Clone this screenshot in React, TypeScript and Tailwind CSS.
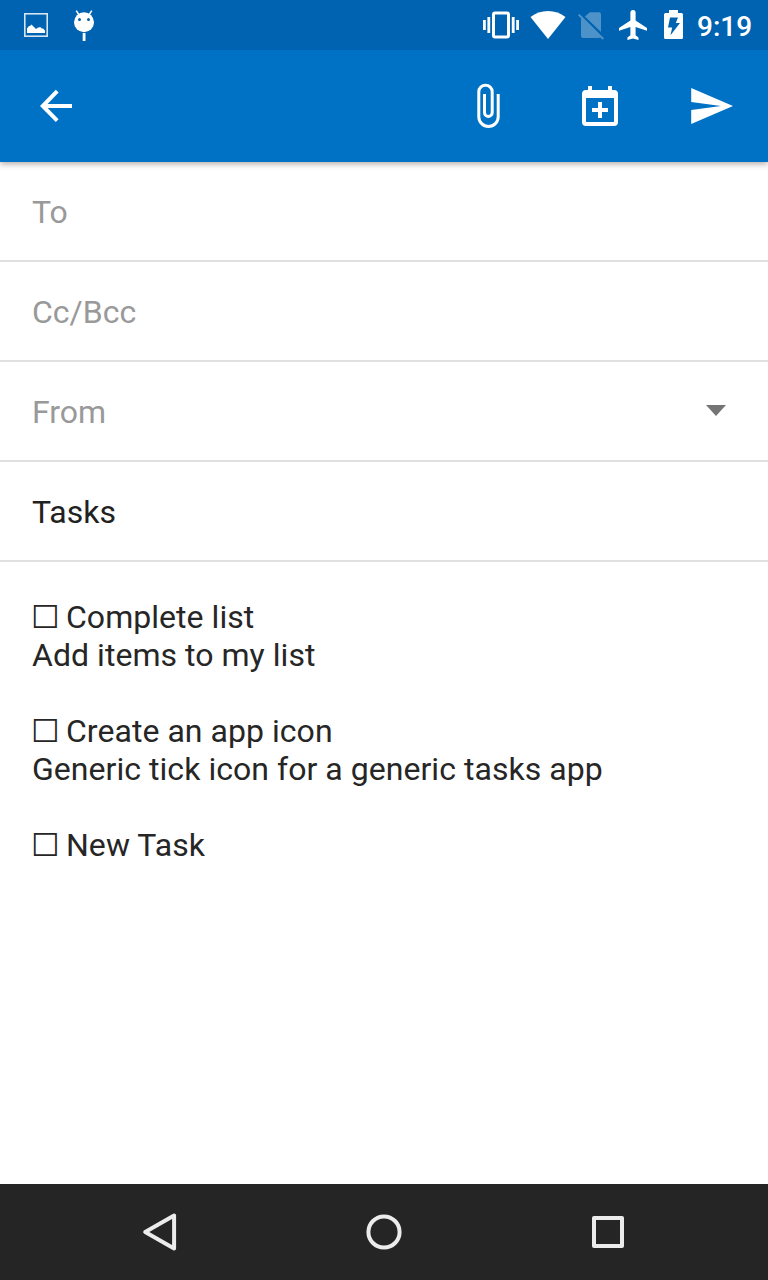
import React from "react";

const fields = [
  { label: "To", filled: false, menu: false },
  { label: "Cc/Bcc", filled: false, menu: false },
  { label: "From", filled: false, menu: true },
  { label: "Tasks", filled: true, menu: false },
];

const tasks = [
  { title: "Complete list", note: "Add items to my list" },
  { title: "Create an app icon", note: "Generic tick icon for a generic tasks app" },
  { title: "New Task", note: "" },
];

function StatusBar() {
  return (
    <div className="z-20 flex h-[50px] shrink-0 items-center bg-[#0063b1] pl-[24px] pr-[15px] text-white">
      <svg className="h-[50px] w-[24px]" viewBox="24 0 24 50">
        <rect x="24.8" y="13.8" width="22.4" height="22.4" fill="none" stroke="#d5e5f2" strokeWidth="1.6" />
        <path d="M27 33V28.5L29 26H30L31.5 24.5L34 27L36 29L38 27.5H39L40 27L42 28.5H43L45 30.5V33Z" fill="white" />
      </svg>
      <svg className="ml-[24px] h-[50px] w-[24px]" viewBox="72 0 24 50">
        <path d="M79 15L76.3 10.6M89 15L91.7 10.6" stroke="white" strokeWidth="1.5" />
        <circle cx="84" cy="22.2" r="10" fill="white" />
        <circle cx="79.5" cy="19.5" r="1.5" fill="#0063b1" />
        <circle cx="88.5" cy="19.5" r="1.5" fill="#0063b1" />
        <rect x="82.7" y="33" width="2.8" height="8" fill="white" />
      </svg>
      <svg className="ml-auto h-[50px] w-[38px]" viewBox="482 0 38 50">
        <rect x="493.5" y="13" width="15" height="24" rx="1.5" fill="none" stroke="white" strokeWidth="3" />
        <path d="M488.8 17V33M513.2 17V33" stroke="white" strokeWidth="2.8" />
        <path d="M484.4 20V30M517.6 20V30" stroke="white" strokeWidth="2.8" />
      </svg>
      <svg className="ml-[10px] h-[50px] w-[36px]" viewBox="530 0 36 50">
        <path d="M530.5 17Q538 11 548 11T565.5 17L548 39Z" fill="white" />
      </svg>
      <svg className="ml-[11px] h-[50px] w-[28px]" viewBox="577 0 28 50">
        <path d="M590 12.3H599Q601 12.3 601 14.3V32L584.8 16.5ZM581 18.3L600.2 37.3Q599.8 38 598 38H583Q581 38 581 36Z" fill="#4d92c8" />
        <path d="M581 15L601 35V37.5H590L581 28Z" fill="#4d92c8" />
        <path d="M578.7 14.5L603.3 39" stroke="#4d92c8" strokeWidth="2" />
        <path d="M580 13.2L601.6 34.6" stroke="#0063b1" strokeWidth="1.6" />
      </svg>
      <svg className="ml-[12px] h-[50px] w-[32px]" viewBox="617 0 32 50">
        <path d="M647 30.8V28L635.6 20.5V12.6A2.5 2.5 0 0 0 630.4 12.6V20.5L619 28V30.8L630.4 27V35.2L627.4 37.5V40L633 38.5L638.5 40V37.5L635.6 35.2V27Z" fill="white" />
      </svg>
      <svg className="ml-[14px] h-[50px] w-[22px]" viewBox="663 0 22 50">
        <path d="M669 10H678V13H681.5Q683 13 683 14.5V37.5Q683 39 681.5 39H665.5Q664 39 664 37.5V14.5Q664 13 665.5 13H669Z" fill="white" />
        <path d="M670 17.5H678L675.8 23H680L670.5 35.2L672.2 27.5H668Z" fill="#0063b1" />
      </svg>
      <span className="ml-[12px] w-[56px] whitespace-nowrap pt-[3px] text-[28px] font-medium leading-[50px]">9:19</span>
    </div>
  );
}

function AppBar() {
  return (
    <header className="z-10 flex h-[112px] shrink-0 items-center bg-[#0072c6] pl-[32px] pr-[32px] shadow-[0_2px_6px_rgba(30,10,0,0.35)]">
      <button aria-label="Back">
        <svg className="h-[48px] w-[48px]" viewBox="32 82 48 48" fill="none" stroke="white" strokeWidth="4">
          <path d="M72 106H43M57.2 91.2L42.8 106L57.2 120.6" />
        </svg>
      </button>
      <button aria-label="Attach" className="ml-auto">
        <svg className="h-[48px] w-[48px]" viewBox="464 82 48 48" fill="none" stroke="white" strokeWidth="3">
          <path d="M498.2 94V116.7A9.7 9.8 0 0 1 478.8 116.7V91.7A6.7 6.5 0 0 1 492.2 91.7V112.5A3.85 4 0 0 1 484.5 112.5V94" />
        </svg>
      </button>
      <button aria-label="Add event" className="ml-[64px]">
        <svg className="h-[48px] w-[48px]" viewBox="576 82 48 48">
          <path fillRule="evenodd" fill="white" d="M588 86H592V90H608V86H612V90H614Q618 90 618 94V122Q618 126 614 126H586Q582 126 582 122V94Q582 90 586 90H588ZM586 98V122H614V98Z" />
          <path d="M600 102V118M592 110H608" stroke="white" strokeWidth="4" />
        </svg>
      </button>
      <button aria-label="Send" className="ml-[64px]">
        <svg className="h-[48px] w-[48px]" viewBox="688 82 48 48">
          <path d="M691.2 88L733 106L691.2 124V110L721 106L691.2 102Z" fill="white" />
        </svg>
      </button>
    </header>
  );
}

function NavigationBar() {
  return (
    <nav className="flex h-[96px] shrink-0 items-center justify-center gap-[176px] bg-[#252525]">
      <svg className="h-[48px] w-[48px]" viewBox="136 1208 48 48" fill="none" stroke="#ececec" strokeWidth="4" strokeLinejoin="round">
        <path d="M174.1 1215.5V1248.5L145.2 1232Z" />
      </svg>
      <svg className="h-[48px] w-[48px]" viewBox="360 1208 48 48" fill="none" stroke="#ececec" strokeWidth="4">
        <circle cx="384" cy="1232" r="15.6" />
      </svg>
      <svg className="h-[48px] w-[48px]" viewBox="584 1208 48 48" fill="none" stroke="#ececec" strokeWidth="4" strokeLinejoin="round">
        <rect x="594" y="1218" width="28" height="28" />
      </svg>
    </nav>
  );
}

export default function App() {
  return (
    <div className="flex h-[1280px] w-[768px] flex-col overflow-hidden bg-white font-['Roboto',sans-serif] text-[32px] text-[#212121]">
      <StatusBar />
      <AppBar />
      <main className="flex-1">
        {fields.map((f) => (
          <div key={f.label} className="flex h-[100px] items-center justify-between border-b-2 border-[#e0e0e0] pl-[32px] pr-[42px]">
            <span className={f.filled ? "pt-[2px] leading-[38px] text-[#212121]" : "pt-[2px] leading-[38px] text-[#999999]"}>{f.label}</span>
            {f.menu && (
              <svg className="mb-[2px] h-[12px] w-[20px]" viewBox="0 0 20 12">
                <path d="M0 1H20L10 12Z" fill="#757575" />
              </svg>
            )}
          </div>
        ))}
        <div className="flex flex-col gap-[38px] pl-[32px] pt-[36px] leading-[38px] tracking-[0.04px] text-[#262626]">
          {tasks.map((t) => (
            <div key={t.title}>
              <div className="flex h-[38px]">
                <span className="-ml-[1px] w-[35px] font-['DejaVu_Sans',sans-serif] text-[32px]">☐</span>
                <span>{t.title}</span>
              </div>
              {t.note && <div className="h-[38px]">{t.note}</div>}
            </div>
          ))}
        </div>
      </main>
      <NavigationBar />
    </div>
  );
}
